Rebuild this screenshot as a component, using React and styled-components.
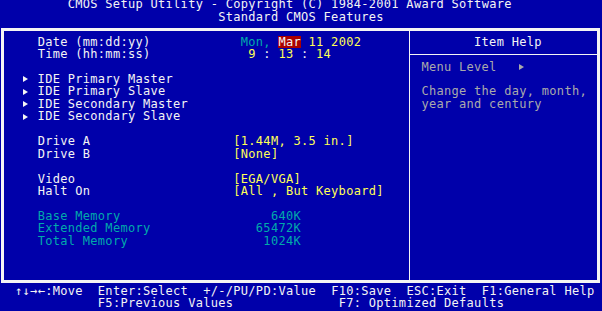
import React from 'react';
import styled, { createGlobalStyle } from 'styled-components';

// one text cell of the 80x25 screen, scaled to 602x311
const CW = 602 / 80;
const ROW = 311 / 25;
const FONT = 12;

const BLUE = '#0000aa';
const WHITE = '#f4f4f4';
const GRAY = '#aaaaaa';
const CYAN = '#00aaaa';
const YELLOW = '#ffff55';
const RED = '#aa0000';

const GlobalStyle = createGlobalStyle`
  html, body {
    margin: 0;
    background: ${BLUE};
    overflow: hidden;
  }
  body {
    font-family: "DejaVu Sans Mono", "Liberation Mono", monospace;
    font-size: ${FONT}px;
    letter-spacing: ${(CW - FONT * 0.602).toFixed(3)}px;
    color: ${WHITE};
    white-space: pre;
  }
`;

const Screen = styled.div`
  width: 602px;
  margin-top: -1.6px;
`;

const Line = styled.div`
  height: ${ROW}px;
  line-height: ${ROW}px;
  padding-left: ${(p) => p.$indent || 0}px;
  color: ${(p) => p.$color || WHITE};
`;

const Frame = styled.div`
  box-sizing: border-box;
  height: 255px;
  margin: 4.72px 2px 1.52px 1px;
  border: 3px double ${WHITE};
  display: grid;
  grid-template-columns: 405px 187px;
  column-gap: 1px;
  background: ${WHITE};
`;

const SetupPanel = styled.div`
  background: ${BLUE};
  padding-top: 4.72px;
`;

const HelpPanel = styled.div`
  background: ${BLUE};
  display: flex;
  flex-direction: column;
`;

const HelpHead = styled.div`
  height: ${ROW}px;
  line-height: ${ROW}px;
  padding: 4.72px 0 5.84px ${63 * CW - 410}px;
  border-bottom: 1px solid ${WHITE};
`;

const HelpBody = styled.div`
  padding-top: 5.6px;
  color: ${GRAY};
`;

const Field = styled.div`
  display: grid;
  grid-template-columns: ${26 * CW}px 1fr;
  height: ${ROW}px;
  line-height: ${ROW}px;
  padding-left: ${5 * CW - 4}px;
  color: ${(p) => p.$color || WHITE};
`;

const Value = styled.span`
  color: ${(p) => p.$color || YELLOW};
`;

const Highlight = styled.span`
  display: inline-block;
  height: ${ROW}px;
  vertical-align: top;
  background: ${RED};
  color: ${WHITE};
`;

const Pointer = styled.span`
  display: inline-block;
  width: ${2 * CW}px;
  height: ${ROW}px;
  vertical-align: top;

  &::before {
    content: '';
    display: block;
    width: 0;
    height: 0;
    margin-top: 3.4px;
    border-left: 5px solid ${(p) => p.$color || WHITE};
    border-top: 3.5px solid transparent;
    border-bottom: 3.5px solid transparent;
  }
`;

const Blank = styled.div`
  height: ${ROW}px;
`;

const submenus = [
  'IDE Primary Master',
  'IDE Primary Slave',
  'IDE Secondary Master',
  'IDE Secondary Slave',
];

const memory = [
  ['Base Memory', '     640K'],
  ['Extended Memory', '   65472K'],
  ['Total Memory', '    1024K'],
];

export default function App() {
  return (
    <>
      <GlobalStyle />
      <Screen>
        <Line $indent={9 * CW}>
          CMOS Setup Utility - Copyright (C) 1984-2001 Award Software
        </Line>
        <Line $indent={29 * CW}>Standard CMOS Features</Line>

        <Frame>
          <SetupPanel>
            <Field>
              <span>Date (mm:dd:yy)</span>
              <span>
                <Value $color={CYAN}> Mon, </Value>
                <Highlight>Mar</Highlight>
                <Value> 11 2002</Value>
              </span>
            </Field>
            <Field>
              <span>Time (hh:mm:ss)</span>
              <span>
                <Value>  9</Value>
                <Value $color={WHITE}> : </Value>
                <Value>13</Value>
                <Value $color={WHITE}> : </Value>
                <Value>14</Value>
              </span>
            </Field>
            <Blank />
            {submenus.map((name) => (
              <Line key={name} $indent={3 * CW - 4}>
                <Pointer />
                {name}
              </Line>
            ))}
            <Blank />
            <Field>
              <span>Drive A</span>
              <Value>[1.44M, 3.5 in.]</Value>
            </Field>
            <Field>
              <span>Drive B</span>
              <Value>[None]</Value>
            </Field>
            <Blank />
            <Field>
              <span>Video</span>
              <Value>[EGA/VGA]</Value>
            </Field>
            <Field>
              <span>Halt On</span>
              <Value>[All , But Keyboard]</Value>
            </Field>
            <Blank />
            {memory.map(([label, size]) => (
              <Field key={label} $color={CYAN}>
                <span>{label}</span>
                <span>{size}</span>
              </Field>
            ))}
          </SetupPanel>

          <HelpPanel>
            <HelpHead>Item Help</HelpHead>
            <HelpBody>
              <Line $indent={56 * CW - 410} $color={GRAY}>
                {'Menu Level   '}
                <Pointer $color={GRAY} />
              </Line>
              <Blank />
              <Line $indent={56 * CW - 410} $color={GRAY}>
                Change the day, month,
              </Line>
              <Line $indent={56 * CW - 410} $color={GRAY}>
                year and century
              </Line>
            </HelpBody>
          </HelpPanel>
        </Frame>

        <Line>
          {'  ↑↓→←:Move  Enter:Select  +/-/PU/PD:Value  F10:Save  ESC:Exit  F1:General Help'}
        </Line>
        <Line>
          {' '.repeat(13) + 'F5:Previous Values' + ' '.repeat(14) + 'F7: Optimized Defaults'}
        </Line>
      </Screen>
    </>
  );
}
